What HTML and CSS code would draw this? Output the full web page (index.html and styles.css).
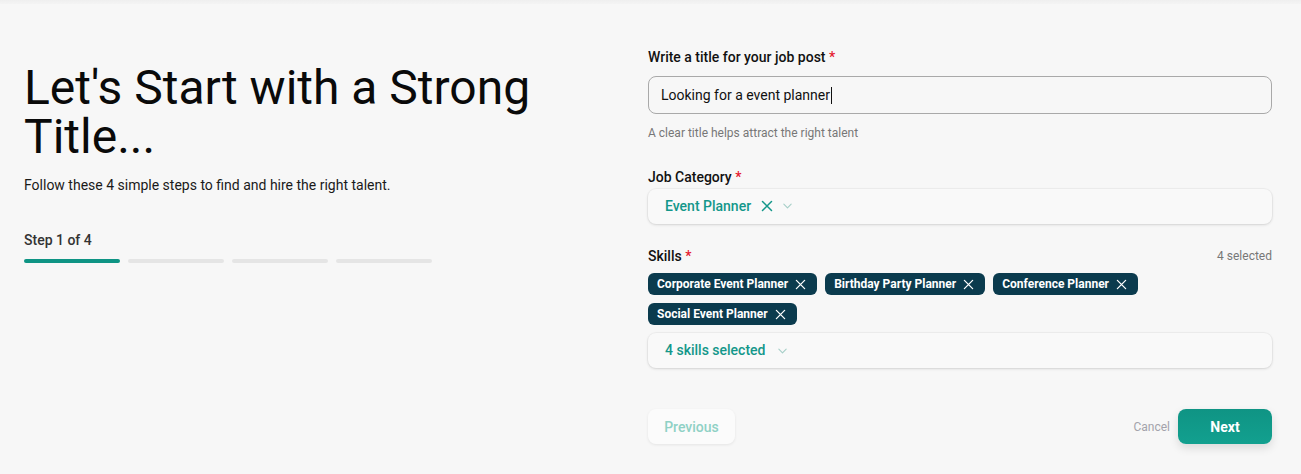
FILE: index.html
```html
<!DOCTYPE html>
<html lang="en">
<head>
<meta charset="utf-8">
<title>Post a job</title>
<link rel="stylesheet" href="styles.css">
</head>
<body>
<div class="topband"></div>
<main class="page">
  <section class="intro">
    <h1 class="intro-title">Let's Start with a Strong Title...</h1>
    <p class="intro-sub">Follow these 4 simple steps to find and hire the right talent.</p>
    <div class="step-label">Step 1 of 4</div>
    <div class="progress">
      <span class="bar bar-active"></span>
      <span class="bar"></span>
      <span class="bar"></span>
      <span class="bar"></span>
    </div>
  </section>

  <section class="form">
    <label class="field-label">Write a title for your job post <span class="req">*</span></label>
    <div class="input">Looking for a event planner<span class="caret"></span></div>
    <p class="hint">A clear title helps attract the right talent</p>

    <label class="field-label label-cat">Job Category <span class="req">*</span></label>
    <div class="select select-cat">
      <span class="select-value">Event Planner</span>
      <svg class="x-icon teal" viewBox="0 0 12 12" width="12" height="12"><path d="M1.5 1.5L10.5 10.5M10.5 1.5L1.5 10.5" stroke="currentColor" stroke-width="1.5" fill="none" stroke-linecap="round"/></svg>
      <svg class="chev" viewBox="0 0 12 12" width="11" height="11"><path d="M2 4.5L6 8.5L10 4.5" stroke="currentColor" stroke-width="1.2" fill="none" stroke-linecap="round" stroke-linejoin="round"/></svg>
    </div>

    <div class="skills-head">
      <label class="field-label">Skills <span class="req">*</span></label>
      <span class="count">4 selected</span>
    </div>
    <div class="chips">
      <span class="chip">Corporate Event Planner<svg class="x-icon" viewBox="0 0 12 12" width="11" height="11"><path d="M1.5 1.5L10.5 10.5M10.5 1.5L1.5 10.5" stroke="currentColor" stroke-width="1.4" fill="none" stroke-linecap="round"/></svg></span>
      <span class="chip">Birthday Party Planner<svg class="x-icon" viewBox="0 0 12 12" width="11" height="11"><path d="M1.5 1.5L10.5 10.5M10.5 1.5L1.5 10.5" stroke="currentColor" stroke-width="1.4" fill="none" stroke-linecap="round"/></svg></span>
      <span class="chip">Conference Planner<svg class="x-icon" viewBox="0 0 12 12" width="11" height="11"><path d="M1.5 1.5L10.5 10.5M10.5 1.5L1.5 10.5" stroke="currentColor" stroke-width="1.4" fill="none" stroke-linecap="round"/></svg></span>
      <span class="chip">Social Event Planner<svg class="x-icon" viewBox="0 0 12 12" width="11" height="11"><path d="M1.5 1.5L10.5 10.5M10.5 1.5L1.5 10.5" stroke="currentColor" stroke-width="1.4" fill="none" stroke-linecap="round"/></svg></span>
    </div>
    <div class="select select-skills">
      <span class="select-value">4 skills selected</span>
      <svg class="chev" viewBox="0 0 12 12" width="11" height="11"><path d="M2 4.5L6 8.5L10 4.5" stroke="currentColor" stroke-width="1.2" fill="none" stroke-linecap="round" stroke-linejoin="round"/></svg>
    </div>

    <div class="actions">
      <button class="btn btn-prev" type="button">Previous</button>
      <div class="actions-right">
        <button class="btn-cancel" type="button">Cancel</button>
        <button class="btn btn-next" type="button">Next</button>
      </div>
    </div>
  </section>
</main>
</body>
</html>
```

FILE: styles.css
```css
* { box-sizing: border-box; }
html, body { margin: 0; padding: 0; }
body {
  background: #f7f7f7;
  font-family: Roboto, "Liberation Sans", Arial, sans-serif;
  color: #111;
  width: 1301px;
  height: 474px;
  overflow: hidden;
}
.topband {
  height: 4px;
  background: linear-gradient(#efefef, #f4f4f4);
}
.page {
  display: grid;
  grid-template-columns: 600px 624px;
  column-gap: 24px;
  padding: 0 24px;
}
.intro {
  padding-top: 59px;
}
.intro-title {
  margin: 0;
  font-size: 48px;
  line-height: 49px;
  font-weight: 400;
  color: #0a0a0a;
  width: 540px;
}
.intro-sub {
  margin: 14px 0 0;
  font-size: 14px;
  line-height: 20px;
  color: #1a1a1a;
}
.step-label {
  margin-top: 35px;
  font-size: 14px;
  line-height: 20px;
  font-weight: 500;
  color: #333;
}
.progress {
  margin-top: 9px;
  display: flex;
  gap: 8px;
}
.bar {
  width: 96px;
  height: 4px;
  border-radius: 2px;
  background: #e5e5e5;
}
.bar-active { background: #0e9484; }

.form {
  padding-top: 43px;
  display: flex;
  flex-direction: column;
}
.field-label {
  font-size: 14px;
  line-height: 20px;
  font-weight: 500;
  color: #111;
}
.req { color: #e5192e; }
.input {
  margin-top: 9px;
  height: 38px;
  border: 1px solid #a9a9a9;
  border-radius: 8px;
  background: #f7f7f7;
  padding: 0 12px;
  display: flex;
  align-items: center;
  font-size: 14px;
  color: #111;
}
.caret {
  display: inline-block;
  width: 1px;
  height: 17px;
  background: #111;
  margin-left: 1px;
}
.hint {
  margin: 11px 0 0;
  font-size: 12px;
  line-height: 16px;
  color: #777;
}
.label-cat { margin-top: 26px; }
.select {
  height: 35px;
  border-radius: 8px;
  background: #f9f9f9;
  box-shadow: 0 1px 3px rgba(0,0,0,0.12), 0 0 0 1px rgba(0,0,0,0.03);
  display: flex;
  align-items: center;
  padding: 0 17px;
}
.select-cat { margin-top: 2px; padding-bottom: 2px; }
.select-value {
  font-size: 14px;
  font-weight: 500;
  color: #13978a;
}
.x-icon { display: block; }
.teal { color: #13978a; margin-left: 10px; }
.chev { color: #a6cfc8; margin-left: 9px; }
.skills-head {
  margin-top: 22px;
  display: flex;
  justify-content: space-between;
  align-items: center;
}
.count {
  font-size: 12px;
  color: #777;
}
.chips {
  margin-top: 7px;
  display: flex;
  flex-wrap: wrap;
  gap: 8px;
  width: 520px;
}
.chip {
  height: 22px;
  border-radius: 6px;
  background: #0b3b4e;
  color: #fff;
  font-size: 12px;
  font-weight: 700;
  display: inline-flex;
  align-items: center;
  padding: 0 11px 0 9px;
  gap: 7px;
}
.select-skills { margin-top: 8px; padding-bottom: 1px; }
.select-skills .chev { margin-left: 12px; }

.actions {
  margin-top: 41px;
  display: flex;
  justify-content: space-between;
  align-items: center;
}
.btn {
  font-family: inherit;
  height: 35px;
  border: none;
  border-radius: 8px;
  font-size: 14px;
  cursor: pointer;
}
.btn-prev {
  width: 87px;
  background: #fbfbfb;
  color: #8fd1c5;
  font-weight: 500;
  box-shadow: 0 1px 3px rgba(0,0,0,0.08);
}
.actions-right {
  display: flex;
  align-items: center;
  gap: 8px;
}
.btn-cancel {
  font-family: inherit;
  background: none;
  border: none;
  padding: 0;
  font-size: 12px;
  color: #a3a3ab;
}
.btn-next {
  width: 94px;
  background: linear-gradient(#0f9484, #12a08f);
  color: #fff;
  font-weight: 700;
  box-shadow: 0 4px 10px rgba(0,0,0,0.12);
}
```
